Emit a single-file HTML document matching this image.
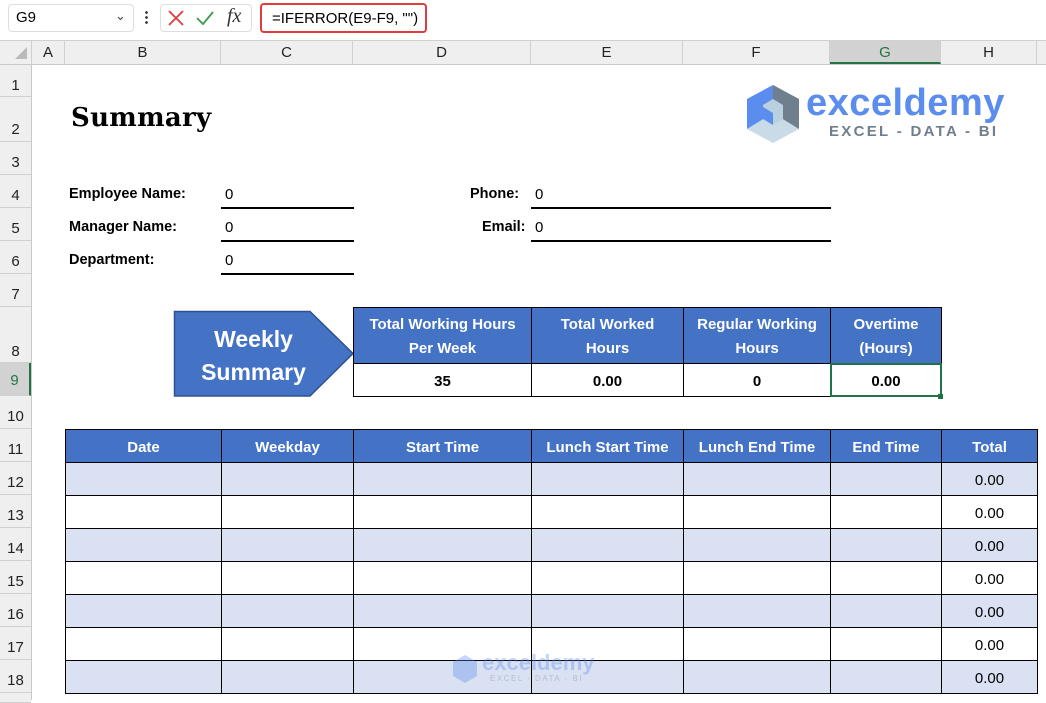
<!DOCTYPE html>
<html><head><meta charset="utf-8"><style>
*{margin:0;padding:0;box-sizing:border-box}
body{width:1046px;height:700px;overflow:hidden;background:#fff;font-family:"Liberation Sans",Calibri,sans-serif;position:relative}
.a{position:absolute}
.ch{position:absolute;top:41px;height:23px;background:#efefef;border-right:1px solid #d0d0d0;font-size:15px;color:#222;text-align:center;line-height:23px}
.rh{position:absolute;left:0;width:31px;background:#efefef;border-bottom:1px solid #d0d0d0;font-size:15px;color:#222;text-align:center}
.lbl{position:absolute;font-weight:bold;font-size:14.5px;color:#000}
.hd{position:absolute;background:#4472c4;color:#fff;font-weight:bold;font-size:15px;text-align:center;display:flex;align-items:center;justify-content:center;line-height:24px;border:1px solid #000;padding-top:3px}
.c{position:absolute;border:1px solid #000;font-size:15px;text-align:center;display:flex;align-items:center;justify-content:center;padding-top:2px}
.ul{position:absolute;height:1.5px;background:#000}
</style></head><body>
<div class="a" style="left:0;top:0;width:1046px;height:36px;background:#fff"></div>
<div class="a" style="left:8px;top:4px;width:126px;height:28px;border:1px solid #ddd;border-radius:4px;font-size:15px;line-height:26px;padding-left:7px">G9</div>
<div class="a" style="left:115px;top:8px;font-size:13px;color:#444">&#8964;</div>
<div class="a" style="left:145px;top:10px;width:3px;height:14px;background:radial-gradient(circle,#444 1.3px,transparent 1.5px) 0 0/3px 5px"></div>
<div class="a" style="left:160px;top:4px;width:92px;height:28px;border:1px solid #ddd;border-radius:4px"></div>
<svg class="a" style="left:167px;top:9px" width="18" height="18"><path d="M2 2L16 16M16 2L2 16" stroke="#e03c3c" stroke-width="1.8"/></svg>
<svg class="a" style="left:195px;top:9px" width="20" height="18"><path d="M2 9L8 15L18 3" stroke="#3b9b4a" stroke-width="1.8" fill="none"/></svg>
<div class="a" style="left:227px;top:5px;font-family:'Liberation Serif',serif;font-style:italic;font-size:20px;color:#333">fx</div>
<div class="a" style="left:260px;top:3px;width:167px;height:30px;border:2.5px solid #e03c3c;border-radius:4px;font-size:15px;line-height:27px;padding-left:10px">=IFERROR(E9-F9, "")</div>
<div class="a" style="left:0;top:40px;width:1046px;height:1px;background:#d0d0d0"></div>
<div class="a" style="left:0;top:41px;width:32px;height:23px;background:#efefef;border-right:1px solid #d0d0d0"></div>
<svg class="a" style="left:14px;top:46px" width="14" height="14"><path d="M13 1L13 13L1 13Z" fill="#bbb"/></svg>
<div class="ch" style="left:32px;width:33px">A</div>
<div class="ch" style="left:65px;width:156px">B</div>
<div class="ch" style="left:221px;width:132px">C</div>
<div class="ch" style="left:353px;width:178px">D</div>
<div class="ch" style="left:531px;width:152px">E</div>
<div class="ch" style="left:683px;width:147px">F</div>
<div class="ch" style="left:830px;width:111px;background:#d2d2d2;color:#217346;border-bottom:2px solid #217346">G</div>
<div class="ch" style="left:941px;width:96px">H</div>
<div class="ch" style="left:1037px;width:9px;border:0"></div>
<div class="a" style="left:0;top:64px;width:1046px;height:1px;background:#c8c8c8"></div>
<div class="a" style="left:31px;top:64px;width:1px;height:636px;background:#c8c8c8"></div>
<div class="rh" style="top:65px;height:32px;line-height:42px">1</div>
<div class="rh" style="top:97px;height:45px;line-height:66px">2</div>
<div class="rh" style="top:142px;height:33px;line-height:42px">3</div>
<div class="rh" style="top:175px;height:33px;line-height:42px">4</div>
<div class="rh" style="top:208px;height:33px;line-height:42px">5</div>
<div class="rh" style="top:241px;height:33px;line-height:42px">6</div>
<div class="rh" style="top:274px;height:33px;line-height:42px">7</div>
<div class="rh" style="top:307px;height:56px;line-height:90px">8</div>
<div class="rh" style="top:363px;height:33px;line-height:36px;background:#d2d2d2;color:#217346;border-right:2px solid #217346">9</div>
<div class="rh" style="top:396px;height:33px;line-height:42px">10</div>
<div class="rh" style="top:429px;height:33px;line-height:42px">11</div>
<div class="rh" style="top:462px;height:33px;line-height:42px">12</div>
<div class="rh" style="top:495px;height:33px;line-height:42px">13</div>
<div class="rh" style="top:528px;height:33px;line-height:42px">14</div>
<div class="rh" style="top:561px;height:33px;line-height:42px">15</div>
<div class="rh" style="top:594px;height:33px;line-height:42px">16</div>
<div class="rh" style="top:627px;height:33px;line-height:42px">17</div>
<div class="rh" style="top:660px;height:33px;line-height:42px">18</div>
<div class="rh" style="top:693px;height:10px"></div>
<div class="a" style="left:71px;top:103px;font-family:'DejaVu Serif',serif;font-weight:bold;font-size:26px;letter-spacing:0.3px">Summary</div>
<svg class="a" style="left:745px;top:83px" width="56" height="62">
<path d="M28 2L54 16L54 46L28 60L2 46L2 16Z" fill="#c9dbe6"/>
<path d="M2 16L28 2L28 30L2 46Z" fill="#5b8def"/>
<path d="M28 2L54 16L54 46L28 30Z" fill="#6f7f8d"/>
<path d="M18 22L28 16L38 22L38 36L28 42L18 36Z" fill="#b9d0df"/>
<path d="M18 36L28 42L28 30L18 24Z" fill="#5b8def"/>
</svg>
<div class="a" style="left:806px;top:82px;font-size:38px;font-weight:bold;color:#5b8def;letter-spacing:0.5px">exceldemy</div>
<div class="a" style="left:829px;top:123px;font-size:15px;font-weight:bold;color:#6f7f8d;letter-spacing:2.3px">EXCEL - DATA - BI</div>
<div class="lbl" style="left:69px;top:186px">Employee Name:</div>
<div class="lbl" style="left:69px;top:219px">Manager Name:</div>
<div class="lbl" style="left:69px;top:252px">Department:</div>
<div class="a" style="left:225px;top:186px;font-size:15px">0</div>
<div class="a" style="left:225px;top:219px;font-size:15px">0</div>
<div class="a" style="left:225px;top:252px;font-size:15px">0</div>
<div class="ul" style="left:221px;top:207px;width:133px"></div>
<div class="ul" style="left:221px;top:240px;width:133px"></div>
<div class="ul" style="left:221px;top:273px;width:133px"></div>
<div class="lbl" style="left:470px;top:186px">Phone:</div>
<div class="lbl" style="left:482px;top:219px">Email:</div>
<div class="a" style="left:535px;top:186px;font-size:15px">0</div>
<div class="a" style="left:535px;top:219px;font-size:15px">0</div>
<div class="ul" style="left:531px;top:207px;width:300px"></div>
<div class="ul" style="left:531px;top:240px;width:300px"></div>
<svg class="a" style="left:173px;top:310px" width="182" height="90"><path d="M1.5 1.5L137 1.5L180 43.5L137 86L1.5 86Z" fill="#4472c4" stroke="#2f528f" stroke-width="1.5"/></svg>
<div class="a" style="left:176px;top:323px;width:155px;text-align:center;color:#fff;font-weight:bold;font-size:23px;line-height:33px">Weekly<br>Summary</div>
<div class="hd" style="left:353px;top:307px;width:179px;height:57px">Total Working Hours<br>Per Week</div>
<div class="hd" style="left:531px;top:307px;width:153px;height:57px">Total Worked<br>Hours</div>
<div class="hd" style="left:683px;top:307px;width:148px;height:57px">Regular Working<br>Hours</div>
<div class="hd" style="left:830px;top:307px;width:112px;height:57px">Overtime<br>(Hours)</div>
<div class="c" style="left:353px;top:363px;width:179px;height:34px;font-weight:bold">35</div>
<div class="c" style="left:531px;top:363px;width:153px;height:34px;font-weight:bold">0.00</div>
<div class="c" style="left:683px;top:363px;width:148px;height:34px;font-weight:bold">0</div>
<div class="c" style="left:830px;top:363px;width:112px;height:34px;font-weight:bold;border:2px solid #217346">0.00</div>
<div class="a" style="left:938px;top:394px;width:5px;height:5px;background:#217346"></div>
<div class="hd" style="left:65px;top:429px;width:157px;height:34px">Date</div>
<div class="hd" style="left:221px;top:429px;width:133px;height:34px">Weekday</div>
<div class="hd" style="left:353px;top:429px;width:179px;height:34px">Start Time</div>
<div class="hd" style="left:531px;top:429px;width:153px;height:34px">Lunch Start Time</div>
<div class="hd" style="left:683px;top:429px;width:148px;height:34px">Lunch End Time</div>
<div class="hd" style="left:830px;top:429px;width:112px;height:34px">End Time</div>
<div class="hd" style="left:941px;top:429px;width:97px;height:34px">Total</div>
<div id="rows"></div>
<script>
var xs=[65,221,353,531,683,830,941,1037],h='';
for(var r=0;r<7;r++){var y=462+r*33,bg=r%2==0?'#d9e1f2':'#fff';
for(var c=0;c<7;c++){h+='<div class="c" style="left:'+xs[c]+'px;top:'+y+'px;width:'+(xs[c+1]-xs[c]+1)+'px;height:34px;background:'+bg+'">'+(c==6?'0.00':'')+'</div>';}}
document.getElementById('rows').innerHTML=h;
</script>
<div class="a" style="left:452px;top:652px;width:142px;height:32px;opacity:0.35">
<svg class="a" style="left:0;top:2px" width="26" height="30"><path d="M13 1L25 8L25 22L13 29L1 22L1 8Z" fill="#5b8def"/></svg>
<div class="a" style="left:30px;top:-2px;font-size:22px;font-weight:bold;color:#5b8def">exceldemy</div>
<div class="a" style="left:38px;top:22px;font-size:8px;color:#6f7f8d;letter-spacing:1.5px">EXCEL - DATA - BI</div>
</div>
</body></html>
